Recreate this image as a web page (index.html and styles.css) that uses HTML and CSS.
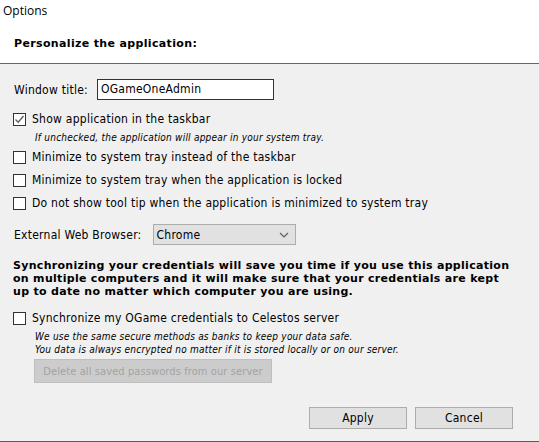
FILE: index.html
```html
<!DOCTYPE html>
<html>
<head>
<meta charset="utf-8">
<link rel="stylesheet" href="styles.css">
</head>
<body>
<div class="window">
  <div class="top">
    <div class="caption">Options</div>
    <h1 class="heading">Personalize the application:</h1>
  </div>
  <div class="content">
    <div class="row title-row">
      <span class="label">Window title:</span>
      <div class="textbox">OGameOneAdmin</div>
    </div>
    <div class="check-row first">
      <span class="box checked">
        <svg width="11" height="11" viewBox="0 0 11 11"><path d="M1.5 5.5 L4.2 8.2 L9.5 2" fill="none" stroke="#5a5a5a" stroke-width="1.3"/></svg>
      </span>
      <span class="check-label">Show application in the taskbar</span>
    </div>
    <div class="hint single">If unchecked, the application will appear in your system tray.</div>
    <div class="check-row second">
      <span class="box"></span>
      <span class="check-label">Minimize to system tray instead of the taskbar</span>
    </div>
    <div class="check-row next">
      <span class="box"></span>
      <span class="check-label">Minimize to system tray when the application is locked</span>
    </div>
    <div class="check-row next">
      <span class="box"></span>
      <span class="check-label">Do not show tool tip when the application is minimized to system tray</span>
    </div>
    <div class="row browser-row">
      <span class="label">External Web Browser:</span>
      <div class="select">
        <span>Chrome</span>
        <svg class="chev" width="10" height="6" viewBox="0 0 10 6"><path d="M1 1 L5 5 L9 1" fill="none" stroke="#5f5f5f" stroke-width="1.2"/></svg>
      </div>
    </div>
    <p class="sync-text">Synchronizing your credentials will save you time if you use this application on multiple computers and it will make sure that your credentials are kept up to date no matter which computer you are using.</p>
    <div class="check-row sync">
      <span class="box"></span>
      <span class="check-label">Synchronize my OGame credentials to Celestos server</span>
    </div>
    <div class="hint double">We use the same secure methods as banks to keep your data safe.<br>You data is always encrypted no matter if it is stored locally or on our server.</div>
    <div class="btn disabled">Delete all saved passwords from our server</div>
    <div class="actions">
      <div class="btn action">Apply</div>
      <div class="btn action">Cancel</div>
    </div>
  </div>
</div>
</body>
</html>
```
FILE: styles.css
```css
html, body {
  margin: 0;
  padding: 0;
  background: #ffffff;
}
body {
  width: 539px;
  height: 442px;
  overflow: hidden;
  font-family: "DejaVu Sans Condensed", "DejaVu Sans", sans-serif;
  font-size: 12px;
  letter-spacing: 0.25px;
  color: #000;
}
.window {
  display: flex;
  flex-direction: column;
  height: 442px;
}
.top {
  background: #fff;
  border-bottom: 1px solid #666666;
  box-sizing: border-box;
  height: 64px;
}
.caption {
  font-family: "Open Sans", "Noto Sans", sans-serif;
  font-size: 12px;
  letter-spacing: 0;
  padding: 3px 0 0 3px;
  line-height: 16px;
}
.heading {
  margin: 17px 0 0 14px;
  font-family: "DejaVu Sans", sans-serif;
  font-size: 11px;
  letter-spacing: 0.35px;
  font-weight: bold;
  line-height: 16px;
}
.content {
  flex: 1;
  background: #f0f0f0;
  border-bottom: 1px solid #5a5a5a;
  padding: 15px 0 0 13px;
  display: flex;
  flex-direction: column;
  align-items: flex-start;
}
.row {
  display: flex;
  align-items: center;
}
.label {
  padding-left: 1px;
}
.title-row {
  height: 21px;
}
.textbox {
  margin-left: 9px;
  width: 177px;
  height: 21px;
  box-sizing: border-box;
  border: 1px solid #333;
  background: #fff;
  padding: 0 0 0 3px;
  line-height: 19px;
}
.check-row {
  display: flex;
  align-items: center;
  height: 13px;
}
.check-row.first { margin-top: 13px; }
.check-row.second { margin-top: 7px; }
.check-row.next { margin-top: 10px; }
.check-row.sync { margin-top: 14px; }
.box {
  width: 13px;
  height: 13px;
  box-sizing: border-box;
  border: 1px solid #333;
  background: #fff;
  display: flex;
  align-items: center;
  justify-content: center;
}
.check-label {
  margin-left: 6px;
  line-height: 13px;
  white-space: nowrap;
}
.hint {
  font-style: italic;
  font-size: 10px;
  letter-spacing: 0.22px;
  padding-left: 22px;
  line-height: 13px;
  color: #000;
}
.hint.single { margin-top: 5px; }
.hint.double { margin-top: 5px; }
.browser-row {
  margin-top: 14px;
  height: 21px;
}
.select {
  margin-left: 11px;
  width: 143px;
  height: 21px;
  box-sizing: border-box;
  border: 1px solid #adadad;
  background: #e1e1e1;
  display: flex;
  align-items: center;
  justify-content: space-between;
  padding: 0 6px 0 3px;
}
.sync-text {
  margin: 14px 0 0 0;
  font-family: "DejaVu Sans", sans-serif;
  font-size: 11px;
  letter-spacing: 0.3px;
  font-weight: bold;
  line-height: 13px;
  width: 500px;
}
.btn {
  box-sizing: border-box;
  display: flex;
  align-items: center;
  justify-content: center;
  white-space: nowrap;
}
.btn.disabled {
  margin: 3px 0 0 21px;
  width: 238px;
  height: 24px;
  background: #cccccc;
  border: 1px solid #bfbfbf;
  color: #a3a3a3;
  font-size: 11px;
  letter-spacing: 0.1px;
}
.actions {
  display: flex;
  gap: 8px;
  margin: 24px 0 0 296px;
}
.btn.action {
  width: 98px;
  height: 22px;
  background: #e1e1e1;
  border: 1px solid #adadad;
}
```
